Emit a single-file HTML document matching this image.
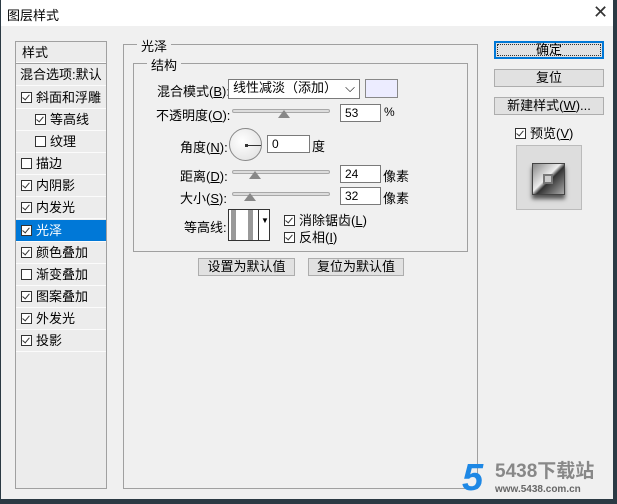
<!DOCTYPE html><html><head><meta charset="utf-8"><style>
*{box-sizing:border-box}body{margin:0;width:617px;height:504px;overflow:hidden;background:#2b3a44;font-family:"Liberation Sans","Noto Sans CJK SC",sans-serif;font-size:12px;color:#000;position:relative}
.win{position:absolute;left:1px;top:0;width:612px;height:499px;background:#f0f0f0}
.title{position:absolute;left:0;top:0;width:612px;height:26px;background:#fff}
.a{position:absolute;white-space:nowrap}
.list{position:absolute;left:14px;top:41px;width:92px;height:448px;border:1px solid #a0a0a0;background:#ececec}
.row{position:absolute;left:0;width:90px;height:22px;line-height:21px;border-bottom:1px solid #fbfbfb;font-size:13px}
.cb{display:inline-block;width:11px;height:11px;border:1px solid #333;vertical-align:-1px;margin-right:4px;position:relative;background:#fff}
.cb.c::after{content:"";position:absolute;left:2px;top:0px;width:3px;height:6px;border:solid #333;border-width:0 1.5px 1.5px 0;transform:rotate(40deg)}
.grp{position:absolute;border:1px solid #a0a0a0}
.lg{position:absolute;background:#f0f0f0;padding:0 4px;font-size:13px}
.btn{position:absolute;height:18px;border:1px solid #adadad;background:#e1e1e1;text-align:center;line-height:16px;font-size:13px}
.inp{position:absolute;height:18px;border:1px solid #7a7a7a;background:#fff;padding-left:4px;line-height:16px;font-size:12px}
.sl{position:absolute;height:4px;border:1px solid #a8a8a8;border-radius:2px;background:#ddd}
.th{position:absolute;width:0;height:0;border-left:6px solid transparent;border-right:6px solid transparent;border-bottom:8px solid #888}
.lab{font-size:13px}
</style></head><body><div class="win">
<div class="title"><span class="a" style="left:6px;top:5px;font-size:13px">图层样式</span><span class="a" style="left:592px;top:2px;font-size:18px;color:#333">✕</span></div>
<div class="list">
<div class="row" style="top:0;height:21px;padding-left:6px">样式</div>
<div style="position:absolute;left:0;top:21px;width:90px;height:1px;background:#a0a0a0"></div>
<div class="row" style="top:22px;padding-left:4px">混合选项:默认</div>
<div class="row" style="top:45px;padding-left:5px"><span class="cb c"></span>斜面和浮雕</div>
<div class="row" style="top:67px;padding-left:19px"><span class="cb c"></span>等高线</div>
<div class="row" style="top:89px;padding-left:19px"><span class="cb"></span>纹理</div>
<div class="row" style="top:111px;padding-left:5px"><span class="cb"></span>描边</div>
<div class="row" style="top:133px;padding-left:5px"><span class="cb c"></span>内阴影</div>
<div class="row" style="top:155px;padding-left:5px"><span class="cb c"></span>内发光</div>
<div class="row" style="top:178px;padding-left:5px;background:#0078d7;color:#fff"><span class="cb c"></span>光泽</div>
<div class="row" style="top:200px;padding-left:5px"><span class="cb c"></span>颜色叠加</div>
<div class="row" style="top:222px;padding-left:5px"><span class="cb"></span>渐变叠加</div>
<div class="row" style="top:244px;padding-left:5px"><span class="cb c"></span>图案叠加</div>
<div class="row" style="top:266px;padding-left:5px"><span class="cb c"></span>外发光</div>
<div class="row" style="top:288px;padding-left:5px"><span class="cb c"></span>投影</div>
</div>
<div class="grp" style="left:122px;top:44px;width:355px;height:445px"></div>
<span class="lg" style="left:136px;top:36px">光泽</span>
<div class="grp" style="left:132px;top:63px;width:335px;height:189px"></div>
<span class="lg" style="left:146px;top:55px">结构</span>
<span class="a lab" style="left:156px;top:81px">混合模式(<u>B</u>):</span>
<div class="inp" style="left:227px;top:79px;width:132px;height:20px;font-size:13px">线性减淡（添加）<span style="position:absolute;right:4px;top:0">⌵</span></div>
<div style="position:absolute;left:364px;top:79px;width:33px;height:19px;border:1px solid #888;background:#ececff"></div>
<span class="a lab" style="left:155px;top:105px">不透明度(<u>O</u>):</span>
<div class="sl" style="left:231px;top:109px;width:98px"></div><div class="th" style="left:277px;top:110px"></div>
<div class="inp" style="left:339px;top:104px;width:41px">53</div><span class="a" style="left:383px;top:105px">%</span>
<span class="a lab" style="left:179px;top:137px">角度(<u>N</u>):</span>
<div style="position:absolute;left:228px;top:128px;width:33px;height:33px;border-radius:50%;border:1px solid #888;background:radial-gradient(circle at 40% 40%,#fff,#ddd)"></div>
<div style="position:absolute;left:244px;top:144px;width:3px;height:3px;background:#333"></div>
<div style="position:absolute;left:245px;top:145px;width:15px;height:1px;background:#333"></div>
<div class="inp" style="left:266px;top:135px;width:43px">0</div><span class="a lab" style="left:311px;top:136px">度</span>
<span class="a lab" style="left:179px;top:166px">距离(<u>D</u>):</span>
<div class="sl" style="left:231px;top:170px;width:98px"></div><div class="th" style="left:248px;top:171px"></div>
<div class="inp" style="left:339px;top:165px;width:41px">24</div><span class="a lab" style="left:382px;top:166px">像素</span>
<span class="a lab" style="left:179px;top:188px">大小(<u>S</u>):</span>
<div class="sl" style="left:231px;top:192px;width:98px"></div><div class="th" style="left:243px;top:193px"></div>
<div class="inp" style="left:339px;top:187px;width:41px">32</div><span class="a lab" style="left:382px;top:188px">像素</span>
<span class="a lab" style="left:183px;top:217px">等高线:</span>
<div style="position:absolute;left:227px;top:209px;width:42px;height:32px;border:1px solid #333;background:#fff">
<div style="position:absolute;left:2px;top:0;width:5px;height:30px;background:#999"></div><div style="position:absolute;left:19px;top:0;width:5px;height:30px;background:#999"></div>
<div style="position:absolute;left:29px;top:0;width:1px;height:30px;background:#333"></div><span class="a" style="left:32px;top:6px;font-size:8px">▼</span></div>
<span class="a lab" style="left:283px;top:210px"><span class="cb c"></span>消除锯齿(<u>L</u>)</span>
<span class="a lab" style="left:283px;top:227px"><span class="cb c"></span>反相(<u>I</u>)</span>
<div class="btn" style="left:197px;top:258px;width:97px">设置为默认值</div>
<div class="btn" style="left:307px;top:258px;width:96px">复位为默认值</div>
<div class="btn" style="left:493px;top:41px;width:110px;border:2px solid #0078d7;line-height:14px;outline:1px dotted #333;outline-offset:-4px">确定</div>
<div class="btn" style="left:493px;top:69px;width:110px">复位</div>
<div class="btn" style="left:493px;top:97px;width:110px">新建样式(<u>W</u>)...</div>
<span class="a lab" style="left:514px;top:123px"><span class="cb c"></span>预览(<u>V</u>)</span>
<div style="position:absolute;left:515px;top:145px;width:66px;height:65px;border:1px solid #bbb;background:#ddd">
<div style="position:absolute;left:15px;top:17px;width:33px;height:32px;background:linear-gradient(135deg,#888,#eee 45%,#333 55%,#aaa);box-shadow:0 4px 4px #555;border:1px solid #444"></div>
<div style="position:absolute;left:26px;top:28px;width:10px;height:10px;border:2px solid #777;background:#ccc"></div></div>
<span class="a" style="left:461px;top:459px;font-size:38px;font-weight:bold;color:#1e88e5;font-style:italic;line-height:38px">5</span>
<span class="a" style="left:494px;top:462px;font-size:19px;font-weight:bold;color:#888;line-height:20px">5438下载站</span>
<span class="a" style="left:494px;top:484px;font-size:10px;font-weight:bold;color:#666">www.5438.com.cn</span>
</div></body></html>
